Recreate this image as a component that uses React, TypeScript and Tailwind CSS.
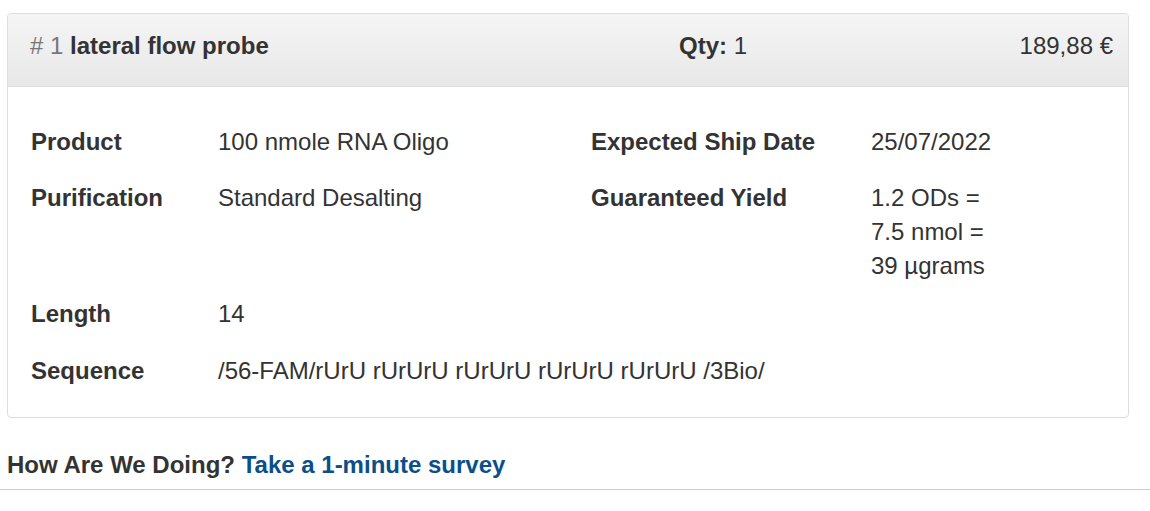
import React from 'react';

type Row = { label: string; value: React.ReactNode };

const lineItem = {
  index: 1,
  name: 'lateral flow probe',
  qty: 1,
  price: '189,88 €',
};

const leftRows: [Row, Row][] = [
  [
    { label: 'Product', value: '100 nmole RNA Oligo' },
    { label: 'Expected Ship Date', value: '25/07/2022' },
  ],
  [
    { label: 'Purification', value: 'Standard Desalting' },
    {
      label: 'Guaranteed Yield',
      value: (
        <>
          1.2 ODs =<br />
          7.5 nmol =<br />
          39 µgrams
        </>
      ),
    },
  ],
];

const bottomRows: Row[] = [
  { label: 'Length', value: '14' },
  { label: 'Sequence', value: '/56-FAM/rUrU rUrUrU rUrUrU rUrUrU rUrUrU /3Bio/' },
];

export default function App() {
  return (
    <div
      className="bg-white text-[#333] text-[24px] leading-[34px] pt-[13px] min-h-screen"
      style={{ fontFamily: '"Liberation Sans", Arial, Helvetica, sans-serif' }}
    >
      <div className="pl-[7px] pr-[21px]">
        {/* Order line panel */}
        <div className="border border-[#ddd] rounded-[4px] overflow-hidden">
          {/* Heading */}
          <div className="h-[73px] border-b border-[#ddd] bg-gradient-to-b from-[#f5f5f5] to-[#e8e8e8] pl-[22px] pr-[15px] pt-[15px] flex">
            <div className="w-[649px]">
              <span className="text-[#777]"># {lineItem.index}</span>{' '}
              <span className="font-bold">{lineItem.name}</span>
            </div>
            <div className="flex-1">
              <span className="font-bold">Qty:</span> {lineItem.qty}
            </div>
            <div className="text-right">{lineItem.price}</div>
          </div>

          {/* Body */}
          <div className="px-[23px] pt-[38px] pb-[29px]">
            <div className="grid grid-cols-[187px_373px_280px_1fr] gap-y-[22px]">
              {leftRows.map(([a, b]) => (
                <React.Fragment key={a.label}>
                  <div className="font-bold">{a.label}</div>
                  <div>{a.value}</div>
                  <div className="font-bold">{b.label}</div>
                  <div>{b.value}</div>
                </React.Fragment>
              ))}
            </div>
            <div className="mt-[14px] grid grid-cols-[187px_1fr] gap-y-[23px]">
              {bottomRows.map((r) => (
                <React.Fragment key={r.label}>
                  <div className="font-bold">{r.label}</div>
                  <div>{r.value}</div>
                </React.Fragment>
              ))}
            </div>
          </div>
        </div>

        {/* Survey */}
        <div className="mt-[30px] font-bold">
          How Are We Doing?{' '}
          <a href="#" className="text-[#0b4f8a] no-underline">
            Take a 1-minute survey
          </a>
        </div>
      </div>
      <hr className="mt-[7px] border-0 border-t border-[#ccc]" />
    </div>
  );
}
